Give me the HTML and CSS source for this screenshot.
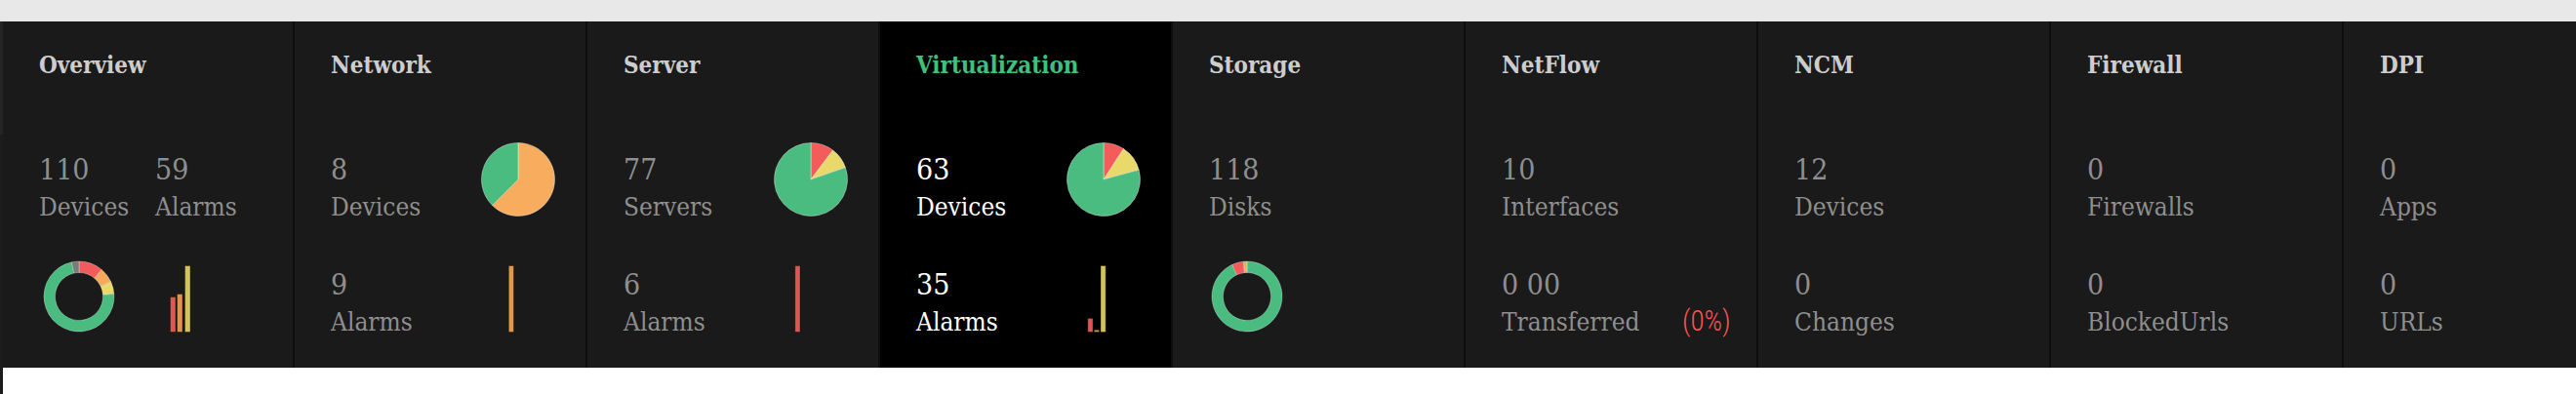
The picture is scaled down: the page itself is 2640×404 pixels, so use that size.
FILE: index.html
```html
<!DOCTYPE html>
<html>
<head>
<meta charset="utf-8">
<title>Dashboard</title>
<link rel="stylesheet" href="styles.css">
</head>
<body>
<div class="topbar"></div>
<div class="main">
  <div class="strip"></div>
  <div class="band">

    <div class="col first">
      <div class="title">Overview</div>
      <div class="row">
        <div class="stat w119"><div class="num">110</div><div class="lbl">Devices</div></div>
        <div class="stat"><div class="num">59</div><div class="lbl">Alarms</div></div>
      </div>
      <div class="row">
        <svg class="donut d-ov" width="74" height="74" viewBox="0 0 74 74">
          <path fill="#f25b5b" d="M37 1A36 36 0 0 1 60.14 9.42L52.75 18.23A24.5 24.5 0 0 0 37 12.5Z"/>
          <path fill="#f6a95c" d="M60.14 9.42A36 36 0 0 1 69.63 21.79L59.2 26.65A24.5 24.5 0 0 0 52.75 18.23Z"/>
          <path fill="#e8d96a" d="M69.63 21.79A36 36 0 0 1 72.91 34.49L61.44 35.29A24.5 24.5 0 0 0 59.2 26.65Z"/>
          <path fill="#4bbc7f" d="M72.91 34.49A36 36 0 1 1 29.52 1.79L31.91 13.04A24.5 24.5 0 1 0 61.44 35.29Z"/>
          <path fill="#7a7a7a" d="M29.52 1.79A36 36 0 0 1 37 1L37 12.5A24.5 24.5 0 0 0 31.91 13.04Z"/>
        </svg>
        <svg class="bars b-ov" width="22" height="69" viewBox="0 0 22 69">
          <rect x="0.5" y="32.5" width="5.5" height="36" fill="#e05656"/>
          <rect x="7.5" y="29.5" width="5.5" height="39" fill="#e0944a"/>
          <rect x="15.5" y="0.5" width="5.5" height="68" fill="#d3c45a"/>
        </svg>
      </div>
    </div>

    <div class="col">
      <div class="title">Network</div>
      <div class="row">
        <div class="stat w154"><div class="num">8</div><div class="lbl">Devices</div></div>
        <svg class="pie" width="76" height="76" viewBox="0 0 76 76">
          <path fill="#f8ad5e" d="M38 38L38 0.5A37.5 37.5 0 1 1 11.48 64.52Z"/>
          <path fill="#4bbc7f" d="M38 38L11.48 64.52A37.5 37.5 0 0 1 38 0.5Z"/>
        </svg>
      </div>
      <div class="row">
        <div class="stat w154"><div class="num">9</div><div class="lbl">Alarms</div></div>
        <svg class="bars b-std" width="20" height="69" viewBox="0 0 20 69">
          <rect x="7.3" y="0.5" width="5.2" height="68" fill="#e0994c"/>
        </svg>
      </div>
    </div>

    <div class="col">
      <div class="title">Server</div>
      <div class="row">
        <div class="stat w154"><div class="num">77</div><div class="lbl">Servers</div></div>
        <svg class="pie" width="76" height="76" viewBox="0 0 76 76">
          <path fill="#f45c5c" d="M38 38L38 0.5A37.5 37.5 0 0 1 60.57 8.05Z"/>
          <path fill="#e8d96a" d="M38 38L60.57 8.05A37.5 37.5 0 0 1 73.46 25.79Z"/>
          <path fill="#4bbc7f" d="M38 38L73.46 25.79A37.5 37.5 0 1 1 38 0.5Z"/>
        </svg>
      </div>
      <div class="row">
        <div class="stat w154"><div class="num">6</div><div class="lbl">Alarms</div></div>
        <svg class="bars b-std" width="20" height="69" viewBox="0 0 20 69">
          <rect x="0.8" y="0.5" width="5.2" height="68" fill="#e05656"/>
        </svg>
      </div>
    </div>

    <div class="col active">
      <div class="title">Virtualization</div>
      <div class="row">
        <div class="stat w154"><div class="num">63</div><div class="lbl">Devices</div></div>
        <svg class="pie" width="76" height="76" viewBox="0 0 76 76">
          <path fill="#f45c5c" d="M38 38L38 0.5A37.5 37.5 0 0 1 58.42 6.55Z"/>
          <path fill="#e8d96a" d="M38 38L58.42 6.55A37.5 37.5 0 0 1 74.22 28.29Z"/>
          <path fill="#4bbc7f" d="M38 38L74.22 28.29A37.5 37.5 0 1 1 38 0.5Z"/>
        </svg>
      </div>
      <div class="row">
        <div class="stat w154"><div class="num">35</div><div class="lbl">Alarms</div></div>
        <svg class="bars b-std" width="20" height="69" viewBox="0 0 20 69">
          <rect x="0.8" y="54.5" width="5.2" height="14" fill="#e05656"/>
          <rect x="7.3" y="66.3" width="5.2" height="2.2" fill="#e0944a"/>
          <rect x="14" y="0.5" width="5.2" height="68" fill="#d3c45a"/>
        </svg>
      </div>
    </div>

    <div class="col">
      <div class="title">Storage</div>
      <div class="row">
        <div class="stat"><div class="num">118</div><div class="lbl">Disks</div></div>
      </div>
      <div class="row">
        <svg class="donut d-st" width="74" height="74" viewBox="0 0 74 74">
          <path fill="#4bbc7f" d="M37 1A36 36 0 1 1 21.79 4.37L26.65 14.8A24.5 24.5 0 1 0 37 12.5Z"/>
          <path fill="#f25b5b" d="M21.79 4.37A36 36 0 0 1 33.24 1.2L34.44 12.63A24.5 24.5 0 0 0 26.65 14.8Z"/>
          <path fill="#f6a95c" d="M33.24 1.2A36 36 0 0 1 37 1L37 12.5A24.5 24.5 0 0 0 34.44 12.63Z"/>
        </svg>
      </div>
    </div>

    <div class="col">
      <div class="title">NetFlow</div>
      <div class="row">
        <div class="stat"><div class="num">10</div><div class="lbl">Interfaces</div></div>
      </div>
      <div class="row">
        <div class="stat w154"><div class="num">0 00</div><div class="lbl">Transferred</div></div>
        <div class="pct">(0%)</div>
      </div>
    </div>

    <div class="col">
      <div class="title">NCM</div>
      <div class="row">
        <div class="stat"><div class="num">12</div><div class="lbl">Devices</div></div>
      </div>
      <div class="row">
        <div class="stat"><div class="num">0</div><div class="lbl">Changes</div></div>
      </div>
    </div>

    <div class="col">
      <div class="title">Firewall</div>
      <div class="row">
        <div class="stat"><div class="num">0</div><div class="lbl">Firewalls</div></div>
      </div>
      <div class="row">
        <div class="stat"><div class="num">0</div><div class="lbl">BlockedUrls</div></div>
      </div>
    </div>

    <div class="col last">
      <div class="title">DPI</div>
      <div class="row">
        <div class="stat"><div class="num">0</div><div class="lbl">Apps</div></div>
      </div>
      <div class="row">
        <div class="stat"><div class="num">0</div><div class="lbl">URLs</div></div>
      </div>
    </div>

  </div>
</div>
</body>
</html>
```

FILE: styles.css
```css
html, body {
  margin: 0;
  padding: 0;
  background: #ffffff;
}

.topbar {
  height: 22px;
  background: #e8e8e8;
}

.main {
  display: flex;
  height: 382px;
}

.strip {
  width: 3px;
  flex: none;
  background: linear-gradient(#252525 0, #252525 116px, #1c1c1c 116px);
}

.band {
  flex: 1;
  height: 355px;
  display: flex;
  background: #1a1a1a;
  overflow: hidden;
}

.col {
  flex: none;
  width: 300px;
  box-sizing: border-box;
  border-right: 2px solid #0d0d0d;
  padding: 30px 0 0 37px;
  font-family: "DejaVu Serif Condensed", "DejaVu Serif", serif;
  font-stretch: condensed;
  color: #8e8e8e;
  white-space: nowrap;
}

.col.first {
  width: 299px;
}

.col.last {
  flex: 1;
  border-right: none;
}

.col.active {
  background: #000000;
  color: #ffffff;
}

.title {
  font-size: 24px;
  line-height: 30px;
  font-weight: bold;
  color: #cdcdcd;
  margin-bottom: 74px;
}

.active .title {
  color: #3ec17c;
}

.row {
  display: flex;
  align-items: flex-start;
  height: 76px;
  margin-bottom: 42px;
}

.stat {
  flex: none;
}

.w119 {
  width: 119px;
}

.w154 {
  width: 154px;
}

.num {
  font-size: 30px;
  line-height: 36px;
}

.lbl {
  font-size: 26px;
  line-height: 40px;
}

.pie {
  flex: none;
  margin-top: -10px;
}

.pie path {
  stroke: rgba(255, 255, 255, 0.55);
  stroke-width: 0.7;
}

.donut {
  flex: none;
  margin-top: -7px;
}

.donut path {
  stroke: rgba(255, 255, 255, 0.5);
  stroke-width: 0.6;
}

.d-ov {
  margin-left: 4px;
}

.d-st {
  margin-left: 2px;
}

.bars {
  flex: none;
  margin-top: -2px;
}

.bars rect {
  stroke: rgba(0, 0, 0, 0.35);
  stroke-width: 1;
}

.b-ov {
  margin-left: 56px;
}

.b-std {
  margin-left: 21px;
}

.pct {
  margin: 35px 0 0 31px;
  font-family: Roboto, "Liberation Sans", sans-serif;
  font-weight: 300;
  font-size: 29px;
  line-height: 40px;
  color: #ff5252;
}
```
